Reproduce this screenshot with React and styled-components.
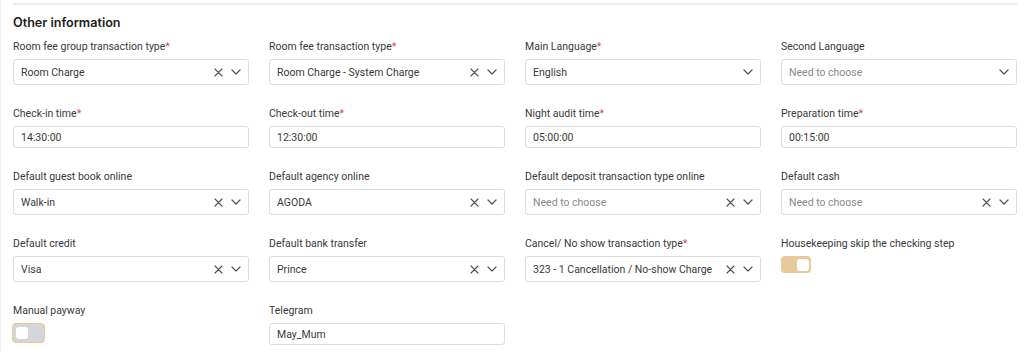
import React from "react";
import styled, { createGlobalStyle } from "styled-components";

const Global = createGlobalStyle`
  html, body { margin: 0; padding: 0; background: #fff; }
  body { font-family: Roboto, "Noto Sans", "Liberation Sans", sans-serif; color: #333; }
  * { box-sizing: border-box; }
`;

const Page = styled.div`
  width: 1024px;
  height: 352px;
  overflow: hidden;
  background: #fff;
  border-left: 1px solid #f1f1f1;
  padding: 3px 7px 0 12px;
`;

const TopRule = styled.div`
  height: 2px;
  background: #eeeeee;
`;

const Heading = styled.h2`
  margin: 9px 0 0 0;
  font-family: Inter, Roboto, sans-serif;
  font-size: 12.6px;
  line-height: 18px;
  font-weight: 600;
  color: #222;
`;

const Grid = styled.div`
  margin-top: 6px;
  display: grid;
  grid-template-columns: repeat(4, 236px);
  column-gap: 20px;
  row-gap: 20px;
`;

const Field = styled.div`
  display: flex;
  flex-direction: column;
  align-items: flex-start;
`;

const Label = styled.label`
  font-size: 10.5px;
  line-height: 16px;
  color: #3a3a3a;
  margin-bottom: 5px;
  white-space: nowrap;
  padding-top: 1px;
  height: 16px;
`;

const Star = styled.span`
  color: #e0443c;
`;

const Box = styled.div`
  width: 236px;
  height: ${(p) => (p.$small ? "22px" : "26px")};
  border: 1px solid #dcdcdc;
  border-radius: 3px;
  display: flex;
  align-items: center;
  padding: 0 7px 0 7px;
  font-size: 10.5px;
  color: ${(p) => (p.$placeholder ? "#8a8a8a" : "#3a3a3a")};
  background: #fff;
`;

const Value = styled.span`
  flex: 1;
  white-space: nowrap;
  overflow: hidden;
`;

const Icons = styled.span`
  display: flex;
  align-items: center;
  gap: 8px;
  color: #555;
`;

const Toggle = styled.div`
  width: ${(p) => (p.$focus ? "33px" : "30px")};
  height: ${(p) => (p.$focus ? "20px" : "17px")};
  border-radius: 4px;
  background: ${(p) => (p.$on ? "#e8c99c" : "#d3d6da")};
  border: ${(p) => (p.$focus ? "1.5px solid #f0c88c" : "none")};
  display: flex;
  align-items: center;
  justify-content: ${(p) => (p.$on ? "flex-end" : "flex-start")};
  padding: 0 2.5px;
  margin-left: ${(p) => (p.$focus ? "-1px" : "0")};
`;

const Knob = styled.div`
  width: 12px;
  height: 12px;
  border-radius: 3px;
  background: #fff;
`;

const XIcon = () => (
  <svg width="9" height="9" viewBox="0 0 9 9" fill="none" stroke="#555" strokeWidth="1.2" strokeLinecap="round">
    <path d="M1 1 L8 8 M8 1 L1 8" />
  </svg>
);

const Chevron = () => (
  <svg width="10" height="6" viewBox="0 0 10 6" fill="none" stroke="#555" strokeWidth="1.2" strokeLinecap="round" strokeLinejoin="round">
    <path d="M1 1 L5 5 L9 1" />
  </svg>
);

const Select = ({ value, placeholder, clear = true }) => (
  <Box $placeholder={!value}>
    <Value>{value || placeholder}</Value>
    <Icons>
      {clear && <XIcon />}
      <Chevron />
    </Icons>
  </Box>
);

const Input = ({ value }) => (
  <Box $small>
    <Value>{value}</Value>
  </Box>
);

const F = ({ label, req, children }) => (
  <Field>
    <Label>
      {label}
      {req && <Star>*</Star>}
    </Label>
    {children}
  </Field>
);

export default function App() {
  return (
    <>
      <Global />
      <Page>
        <TopRule />
        <Heading>Other information</Heading>
        <Grid>
          <F label="Room fee group transaction type" req>
            <Select value="Room Charge" />
          </F>
          <F label="Room fee transaction type" req>
            <Select value="Room Charge - System Charge" />
          </F>
          <F label="Main Language" req>
            <Select value="English" clear={false} />
          </F>
          <F label="Second Language">
            <Select placeholder="Need to choose" clear={false} />
          </F>

          <F label="Check-in time" req>
            <Input value="14:30:00" />
          </F>
          <F label="Check-out time" req>
            <Input value="12:30:00" />
          </F>
          <F label="Night audit time" req>
            <Input value="05:00:00" />
          </F>
          <F label="Preparation time" req>
            <Input value="00:15:00" />
          </F>

          <F label="Default guest book online">
            <Select value="Walk-in" />
          </F>
          <F label="Default agency online">
            <Select value="AGODA" />
          </F>
          <F label="Default deposit transaction type online">
            <Select placeholder="Need to choose" />
          </F>
          <F label="Default cash">
            <Select placeholder="Need to choose" />
          </F>

          <F label="Default credit">
            <Select value="Visa" />
          </F>
          <F label="Default bank transfer">
            <Select value="Prince" />
          </F>
          <F label="Cancel/ No show transaction type" req>
            <Select value="323 - 1 Cancellation / No-show Charge" />
          </F>
          <F label="Housekeeping skip the checking step">
            <Toggle $on>
              <Knob />
            </Toggle>
          </F>

          <F label="Manual payway">
            <Toggle $focus>
              <Knob />
            </Toggle>
          </F>
          <F label="Telegram">
            <Input value="May_Mum" />
          </F>
        </Grid>
      </Page>
    </>
  );
}
